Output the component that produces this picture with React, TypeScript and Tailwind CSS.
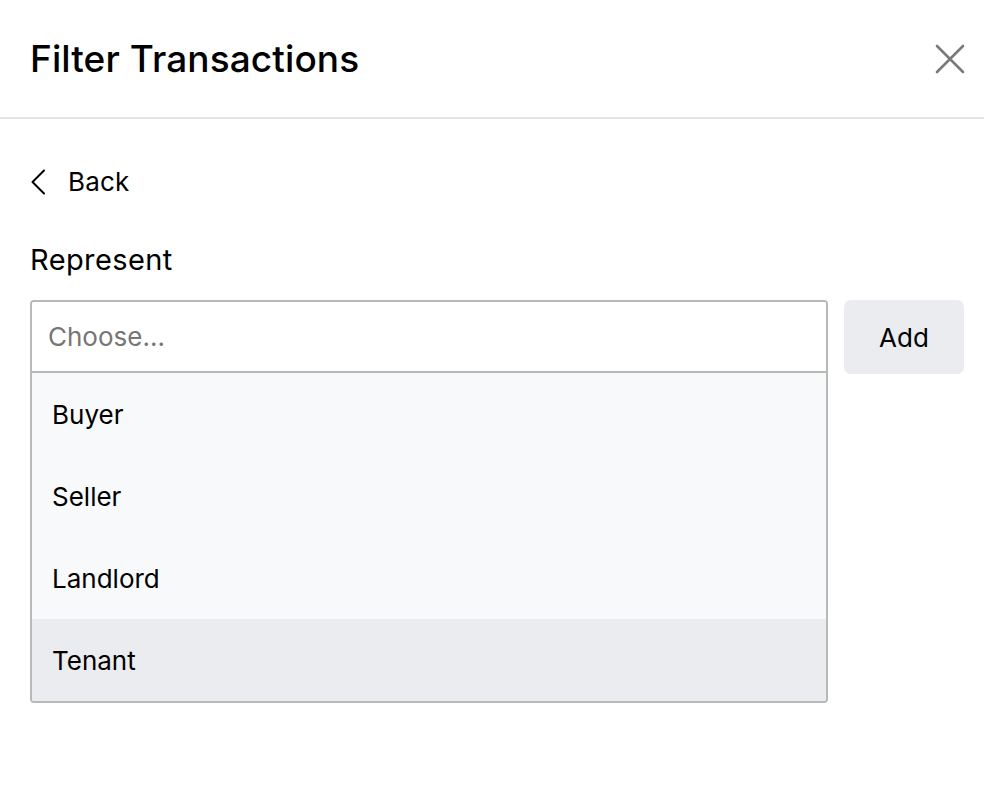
import { useState } from 'react';

const options = ['Buyer', 'Seller', 'Landlord', 'Tenant'];

export default function App() {
  const [hovered, setHovered] = useState<string | null>('Tenant');

  return (
    <div
      className="min-h-[810px] w-full bg-white text-black"
      style={{ fontFamily: 'Inter, "Liberation Sans", Arial, sans-serif' }}
    >
      {/* Header */}
      <div className="flex h-[119px] items-center justify-between border-b-2 border-[#e3e5e8] pl-[30px] pr-[12px]">
        <h1 className="text-[37px] font-medium leading-none tracking-[0.1px]">Filter Transactions</h1>
        <button type="button" aria-label="Close" className="flex h-[44px] w-[44px] items-center justify-center text-[#7a7a7a]">
          <svg width="30" height="30" viewBox="0 0 30 30" fill="none" stroke="currentColor" strokeWidth="2.6" strokeLinecap="round">
            <path d="M2 2l26 26M28 2L2 28" />
          </svg>
        </button>
      </div>

      {/* Body */}
      <div className="pl-[30px] pr-[20px] pt-[50px]">
        <button type="button" className="flex items-center gap-[22px] text-[26px] leading-none tracking-[0.2px]">
          <svg width="16" height="26" viewBox="0 0 16 26" fill="none" stroke="currentColor" strokeWidth="2" strokeLinecap="round" strokeLinejoin="round">
            <path d="M14 1.5L2.5 13 14 24.5" />
          </svg>
          <span>Back</span>
        </button>

        <div className="mt-[50px] text-[29px] leading-none tracking-[0.4px]">Represent</div>

        <div className="mt-[26px] flex items-start gap-[16px]">
          <div className="flex-1 overflow-hidden rounded-[4px] border-2 border-[#b8b8b8]">
            <div className="flex h-[71px] items-center border-b-2 border-[#b8b8b8] bg-white px-[16px] text-[26px] text-[#767676]">
              Choose...
            </div>
            <ul>
              {options.map(opt => (
                <li
                  key={opt}
                  onMouseEnter={() => setHovered(opt)}
                  className={
                    'flex h-[82px] items-center px-[20px] text-[26px] ' +
                    (hovered === opt ? 'bg-[#ebecef]' : 'bg-[#f8f9fa]')
                  }
                >
                  {opt}
                </li>
              ))}
            </ul>
          </div>
          <button type="button" className="flex h-[74px] w-[120px] items-center justify-center rounded-[7px] bg-[#ebecef] text-[26px]">
            Add
          </button>
        </div>
      </div>
    </div>
  );
}
